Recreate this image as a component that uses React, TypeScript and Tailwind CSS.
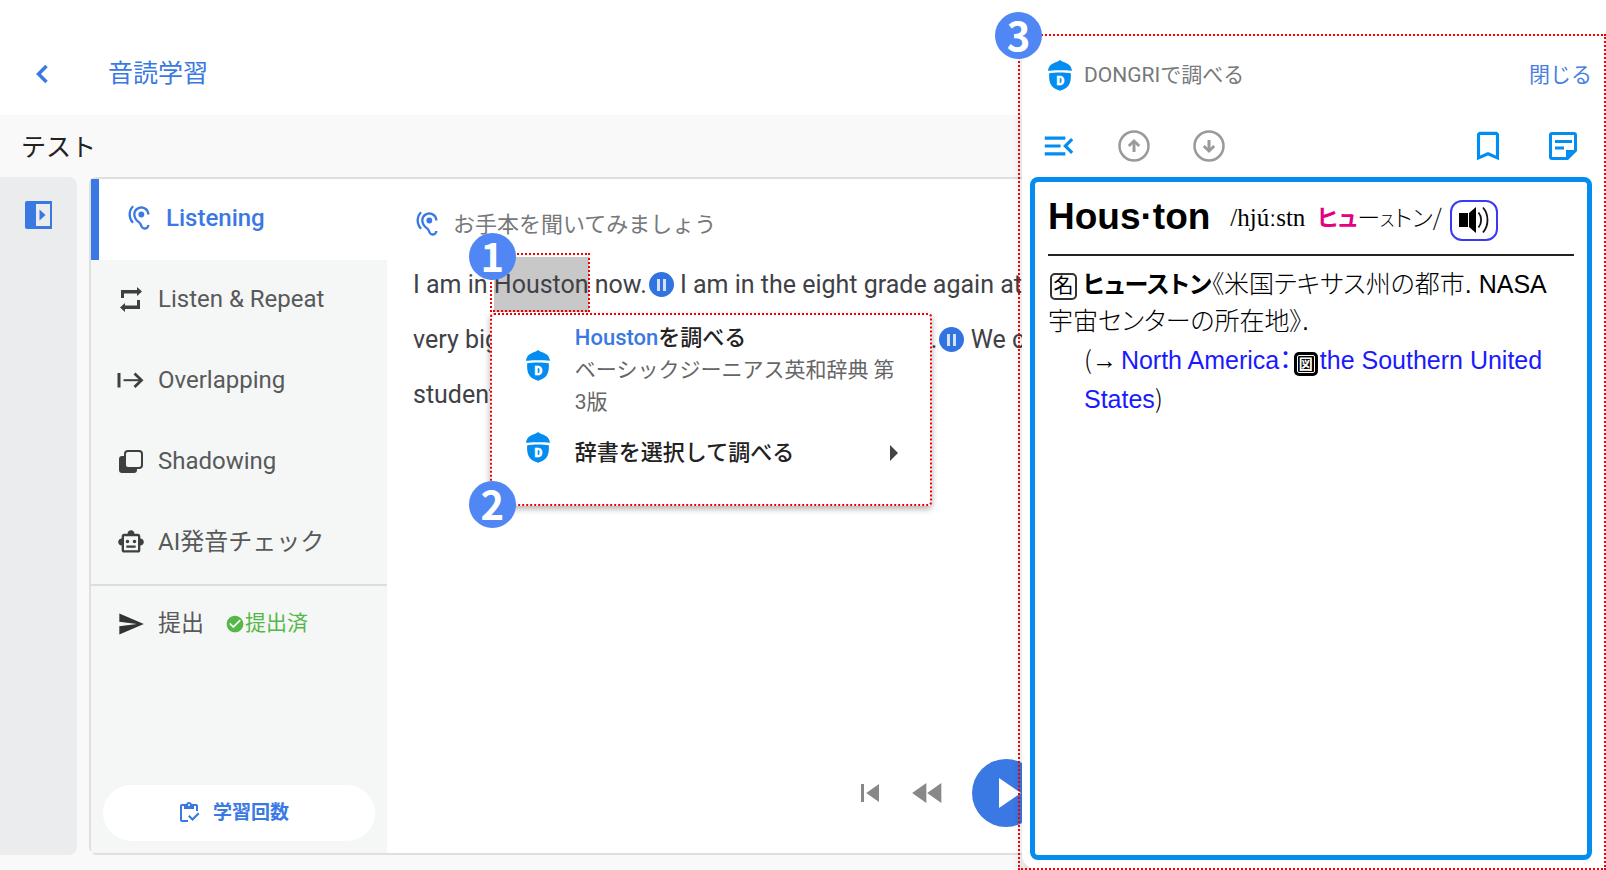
import type { ReactNode } from "react";
import {
  MdBookmarkBorder,
  MdCheckCircle,
  MdFastRewind,
  MdHearing,
  MdMenuOpen,
  MdOutlineInventory,
  MdOutlineSmartToy,
  MdSend,
  MdSkipPrevious,
} from "react-icons/md";

function DongriLogo() {
  return (
    <svg viewBox="0 0 24 31" className="h-[31px] w-6 shrink-0" aria-hidden="true">
      <path d="M12 0c1.300 1.300 3 1.700 5 2.400 4.300 1.600 6.800 4.300 6.900 8.600C20 10 4 10 .1 11 .2 6.700 2.700 4 7 2.400 9 1.700 10.700 1.300 12 0z" fill="#048df0" />
      <path d="M1.200 13.200c5.500-1 16.100-1 21.600 0 .6 8.500-1.600 13.600-6.500 15.800-1.700.7-3 1-4.300 2-1.300-1-2.600-1.300-4.300-2C2.800 26.800.6 21.700 1.200 13.200z" fill="#048df0" />
      <text x="12.500" y="25" textAnchor="middle" fontSize="12" fontWeight="900" fontFamily="Roboto, sans-serif" fill="#fff" stroke="#fff" strokeWidth=".5">D</text>
    </svg>
  );
}

function RepeatIcon() {
  return (
    <svg viewBox="0 0 28 28" className="size-7" fill="currentColor" aria-hidden="true">
      <path d="M4 5h16V2l5 4.500-5 4.500V8.500H7V13H4zM23 15v9H8v3l-5-4.500L8 18v2.500h12V15z" />
    </svg>
  );
}

function OverlapIcon() {
  return (
    <svg viewBox="0 0 28 28" className="size-7" fill="none" stroke="currentColor" aria-hidden="true">
      <path d="M2 7v14.500" strokeWidth="3" />
      <path d="M6.500 14.200H24" strokeWidth="2" />
      <path d="M17.500 7.500l7 6.700-7 6.800" strokeWidth="2.800" />
    </svg>
  );
}

function ShadowIcon() {
  return (
    <svg viewBox="0 0 28 28" className="size-7" aria-hidden="true">
      <path d="M5 9h3v11h12v3a3 3 0 0 1-3 3H5a3 3 0 0 1-3-3V12a3 3 0 0 1 3-3z" fill="currentColor" />
      <rect x="8" y="4" width="17" height="17" rx="3" fill="#f5f7f6" stroke="currentColor" strokeWidth="2" />
    </svg>
  );
}

function DrawerIcon() {
  return (
    <svg viewBox="0 0 27 28" className="h-7 w-[27px]" aria-hidden="true">
      <path fillRule="evenodd" d="M2 0h25v28H2a2 2 0 0 1-2-2V2a2 2 0 0 1 2-2zm9 3v22h14V3z" fill="#3a78e4" />
      <path d="M14.500 8.500v11l6-5.500z" fill="#3a78e4" />
    </svg>
  );
}

function ArrowCircle({ down = false }: { down?: boolean }) {
  return (
    <svg viewBox="0 0 32 32" className={down ? "size-8 rotate-180" : "size-8"} fill="none" stroke="#9a9a9a" aria-hidden="true">
      <circle cx="16" cy="16" r="14.500" strokeWidth="2.500" />
      <path d="M16 22v-9" strokeWidth="3" />
      <path d="M10.800 16l5.200-5 5.200 5" strokeWidth="2.800" />
    </svg>
  );
}

function NoteIcon() {
  return (
    <svg viewBox="0 0 30 30" className="size-[30px]" aria-hidden="true">
      <path fillRule="evenodd" d="M4 1h22a3 3 0 0 1 3 3v16l-9 9H4a3 3 0 0 1-3-3V4a3 3 0 0 1 3-3zm0 3v22h14v-7h8V4z" fill="#048df0" />
      <path d="M7 10.500h17M7 17h9" stroke="#048df0" strokeWidth="2.800" />
    </svg>
  );
}

function SpeakerIcon() {
  return (
    <svg viewBox="0 0 32 28" className="h-7 w-8" aria-hidden="true">
      <path d="M1 7h9v14H1zM11 7l7-6v26l-7-6z" fill="#000" />
      <path d="M20.500 6.500c3.500 4 3.500 11 0 15M25 1.500c6 7 6 18 0 25" fill="none" stroke="#111" strokeWidth="1.800" />
    </svg>
  );
}

function PauseMark() {
  return (
    <button aria-label="一時停止" className="ml-[2px] flex size-[25px] shrink-0 items-center justify-center gap-[3px] rounded-full bg-[#3273e2]">
      <span className="h-3 w-[3px] bg-[#d3e1fa]" />
      <span className="h-3 w-[3px] bg-[#d3e1fa]" />
    </button>
  );
}

function Badge({ n, className }: { n: number; className: string }) {
  return (
    <span className={`absolute z-30 flex size-[47px] items-center justify-center rounded-full bg-[#5087f5] pb-1 font-['Noto_Sans_CJK_JP',sans-serif] text-[40px] leading-none font-bold text-white ${className}`}>
      {n}
    </span>
  );
}

const NAV: { label: string; icon: ReactNode }[] = [
  { label: "Listen & Repeat", icon: <RepeatIcon /> },
  { label: "Overlapping", icon: <OverlapIcon /> },
  { label: "Shadowing", icon: <ShadowIcon /> },
  { label: "AI発音チェック", icon: <MdOutlineSmartToy className="size-7" /> },
];

function SideNav() {
  return (
    <nav className="flex w-[296px] shrink-0 flex-col bg-[#f5f7f6] text-[24px] text-[#58595b]">
      <button className="flex h-[81px] items-center gap-[13px] border-l-8 border-[#3a78e4] bg-white pb-[3px] pl-[26px] text-[#3a78e4]">
        <MdHearing className="size-7" />
        <span className="font-medium">Listening</span>
      </button>
      {NAV.map((item) => (
        <button key={item.label} className="flex h-[81px] items-center gap-[13px] pb-[3px] pl-[26px]">
          <span className="text-[#3f3f3f]">{item.icon}</span>
          {item.label}
        </button>
      ))}
      <button className="flex h-[81px] items-center gap-[13px] border-t-2 border-[#dcdddd] pb-[3px] pl-[26px]">
        <MdSend className="size-7 text-[#333]" />
        <span className="text-[23px]">提出</span>
        <span className="ml-2 flex items-center text-[21px] text-[#55b748]">
          <MdCheckCircle className="size-5" />
          提出済
        </span>
      </button>
      <button className="mx-3 mt-auto mb-3 flex h-14 items-center justify-center gap-3 rounded-full bg-white pr-3 text-[19px] font-bold text-[#3a78e4]">
        <MdOutlineInventory className="size-6" />
        学習回数
      </button>
    </nav>
  );
}

function LookupMenu() {
  return (
    <div className="absolute top-[56px] -left-1 z-20 w-[442px] rounded-sm border-2 border-dotted border-[#f00000] bg-white pt-[7px] pb-[31px] text-[22px] leading-8 whitespace-normal shadow-[0_3px_6px_rgba(0,0,0,0.3)]">
      <button className="flex w-full items-center gap-[25px] pr-[28px] pl-[34px] text-left">
        <span className="pb-[10px]">
          <DongriLogo />
        </span>
        <span>
          <span className="block font-medium text-[#222]">
            <span className="text-[#3a78e4]">Houston</span>を調べる
          </span>
          <span className="block text-[21px] text-[#666]">ベーシックジーニアス英和辞典 第3版</span>
        </span>
      </button>
      <button className="mt-[14px] flex w-full items-center gap-[25px] pr-8 pl-[34px] text-left font-medium text-[#222]">
        <span className="pb-[10px]">
          <DongriLogo />
        </span>
        <span className="flex-1">辞書を選択して調べる</span>
        <svg viewBox="0 0 8 16" className="h-4 w-2" aria-hidden="true">
          <path d="M0 0l8 8-8 8z" fill="#444" />
        </svg>
      </button>
    </div>
  );
}

function Lesson() {
  return (
    <section className="flex min-w-0 flex-1 flex-col bg-white pl-[26px]">
      <h2 className="flex h-[78px] items-center gap-3 pt-3 text-[22px] text-[#77787a]">
        <MdHearing className="size-7 text-[#3a78e4]" />
        お手本を聞いてみましょう
      </h2>
      <div className="text-[25px] leading-[55px] whitespace-nowrap text-[#404146]">
        <p className="flex items-center">
          I am in&nbsp;
          <span className="relative block bg-[#c8c8c8]">
            Houston
            <span className="absolute -top-1 right-[-1px] bottom-0 -left-1 border-2 border-dotted border-[#f00000]" />
            <Badge n={1} className="-top-6 -left-[25px]" />
            <LookupMenu />
            <Badge n={2} className="top-[224px] -left-[25px]" />
          </span>
          &nbsp;now.
          <PauseMark />
          &nbsp;I am in the eight grade again at
        </p>
        <p className="-mr-[3px] flex items-center">
          <span className="flex-1">very big</span>
          .
          <PauseMark />
          &nbsp;We c
        </p>
        <p>student</p>
      </div>
      <div className="mt-auto -mr-[18px] mb-[26px] flex items-center justify-end text-[#888]">
        <button aria-label="最初へ"><MdSkipPrevious className="size-9" /></button>
        <button aria-label="巻き戻し" className="ml-5"><MdFastRewind className="size-10" /></button>
        <button aria-label="再生" className="ml-6 flex size-[68px] items-center justify-center rounded-full bg-[#3a78e4] pl-2">
          <svg viewBox="0 0 22 30" className="h-[30px] w-[22px]" aria-hidden="true">
            <path d="M0 0l22 15L0 30z" fill="#fff" />
          </svg>
        </button>
      </div>
    </section>
  );
}

function Dictionary() {
  return (
    <article className="flex-1 rounded-lg border-[5px] border-[#048df0] bg-white px-[13px] font-['Liberation_Sans','Noto_Sans_CJK_JP',sans-serif] text-[25px] leading-[37px] text-black">
      <header className="flex h-[74px] items-center border-b-2 border-[#222]">
        <h1 className="pb-1 text-[37px] font-bold">Hous·ton</h1>
        <span className="ml-5 flex items-baseline">
          <span className="font-['Liberation_Serif',serif] text-[25px]">/hjúːstn</span>
          <span className="ml-3 text-[23px] font-bold text-[#e5007f] [font-feature-settings:'palt']">ヒュ</span>
          <span className="font-['Noto_Sans_CJK_JP',sans-serif] text-[23px] font-light [font-feature-settings:'palt']">
            ー<span className="text-[16px]">ス</span>トン/
          </span>
        </span>
        <button aria-label="発音を聞く" className="mt-1 ml-2 flex h-[41px] w-12 items-center justify-center rounded-xl border-2 border-[#3a3af5]">
          <SpeakerIcon />
        </button>
      </header>
      <p className="pt-[10px] font-light">
        <span className="mr-[6px] ml-[2px] inline-flex size-[27px] items-center justify-center rounded-[5px] border-2 border-[#333] text-[20px] leading-none font-normal">名</span>
        <span className="[font-feature-settings:'palt']">
          <b className="text-[24px] font-bold">ヒューストン</b>《米国テキサス州の都市. <span className="font-normal">NASA</span>
          <br />
          宇宙センターの所在地》.
        </span>
      </p>
      <p className="pl-9">
        <span className="font-['Noto_Sans_CJK_JP',sans-serif] font-light">(</span>
        <span className="mr-1">→</span>
        <a href="#north-america" className="text-[#1a1aff] [font-feature-settings:'palt']">North America：</a>
        <span className="mx-[2px] inline-flex size-6 items-center justify-center rounded-[5px] bg-black">
          <span className="flex size-[18px] items-center justify-center rounded-[2px] border border-white text-[14px] leading-none font-bold text-white">図</span>
        </span>
        <a href="#southern-us" className="text-[#1a1aff]">the Southern United States</a>
        <span className="font-['Noto_Sans_CJK_JP',sans-serif] font-light">)</span>
      </p>
    </article>
  );
}

function DongriPanel() {
  return (
    <aside className="relative z-20 flex w-[584px] shrink-0 flex-col rounded-bl-2xl bg-white pr-[14px] pb-[10px] pl-2 shadow-[-2px_16px_10px_rgba(0,0,0,0.12)]">
      <div className="pointer-events-none absolute top-[34px] right-0 bottom-0 -left-1 border-2 border-dotted border-[#f00000]" />
      <Badge n={3} className="top-3 -left-[27px]" />
      <div className="flex h-[115px] items-center gap-3 pt-9 pl-[18px] text-[21px] text-[#77787a]">
        <DongriLogo />
        <span>DONGRIで調べる</span>
        <button className="ml-auto text-[#4a80e0]">閉じる</button>
      </div>
      <div className="flex h-[62px] items-center pr-[14px] pl-[10px] text-[#048df0]">
        <button aria-label="目次"><MdMenuOpen className="size-[38px]" /></button>
        <button aria-label="前へ" className="ml-[40px]"><ArrowCircle /></button>
        <button aria-label="次へ" className="ml-[43px]"><ArrowCircle down /></button>
        <button aria-label="しおり" className="ml-auto"><MdBookmarkBorder className="size-[38px]" /></button>
        <button aria-label="メモ" className="ml-[41px]"><NoteIcon /></button>
      </div>
      <Dictionary />
    </aside>
  );
}

export default function App() {
  return (
    <div className="flex min-h-screen bg-white font-[Roboto,'Noto_Sans_CJK_JP',sans-serif]">
      <main className="flex min-w-0 flex-1 flex-col overflow-hidden">
        <header className="flex h-[115px] items-center pt-8 pl-[22px] text-[#3a78e4]">
          <button aria-label="戻る" className="flex size-10 items-center justify-center">
            <svg viewBox="0 0 12 18" className="h-[18px] w-3" fill="none" stroke="currentColor" strokeWidth="3.500" aria-hidden="true">
              <path d="M10.500 1L2.500 9l8 8" />
            </svg>
          </button>
          <h1 className="pl-[46px] text-[25px]">音読学習</h1>
        </header>
        <div className="flex flex-1 flex-col bg-[#f9f9f9] pb-[15px]">
          <h2 className="flex h-[62px] items-center pt-1 pl-[21px] text-[25px] text-[#222]">テスト</h2>
          <div className="flex flex-1 gap-3">
            <div className="w-[77px] shrink-0 rounded-r-lg bg-[#ebecee] pt-6 pl-[25px]">
              <button aria-label="メニューを開く" className="block"><DrawerIcon /></button>
            </div>
            <div className="flex min-w-0 flex-1 rounded-l-lg border-2 border-r-0 border-[#dedfdf]">
              <SideNav />
              <Lesson />
            </div>
          </div>
        </div>
      </main>
      <DongriPanel />
    </div>
  );
}
